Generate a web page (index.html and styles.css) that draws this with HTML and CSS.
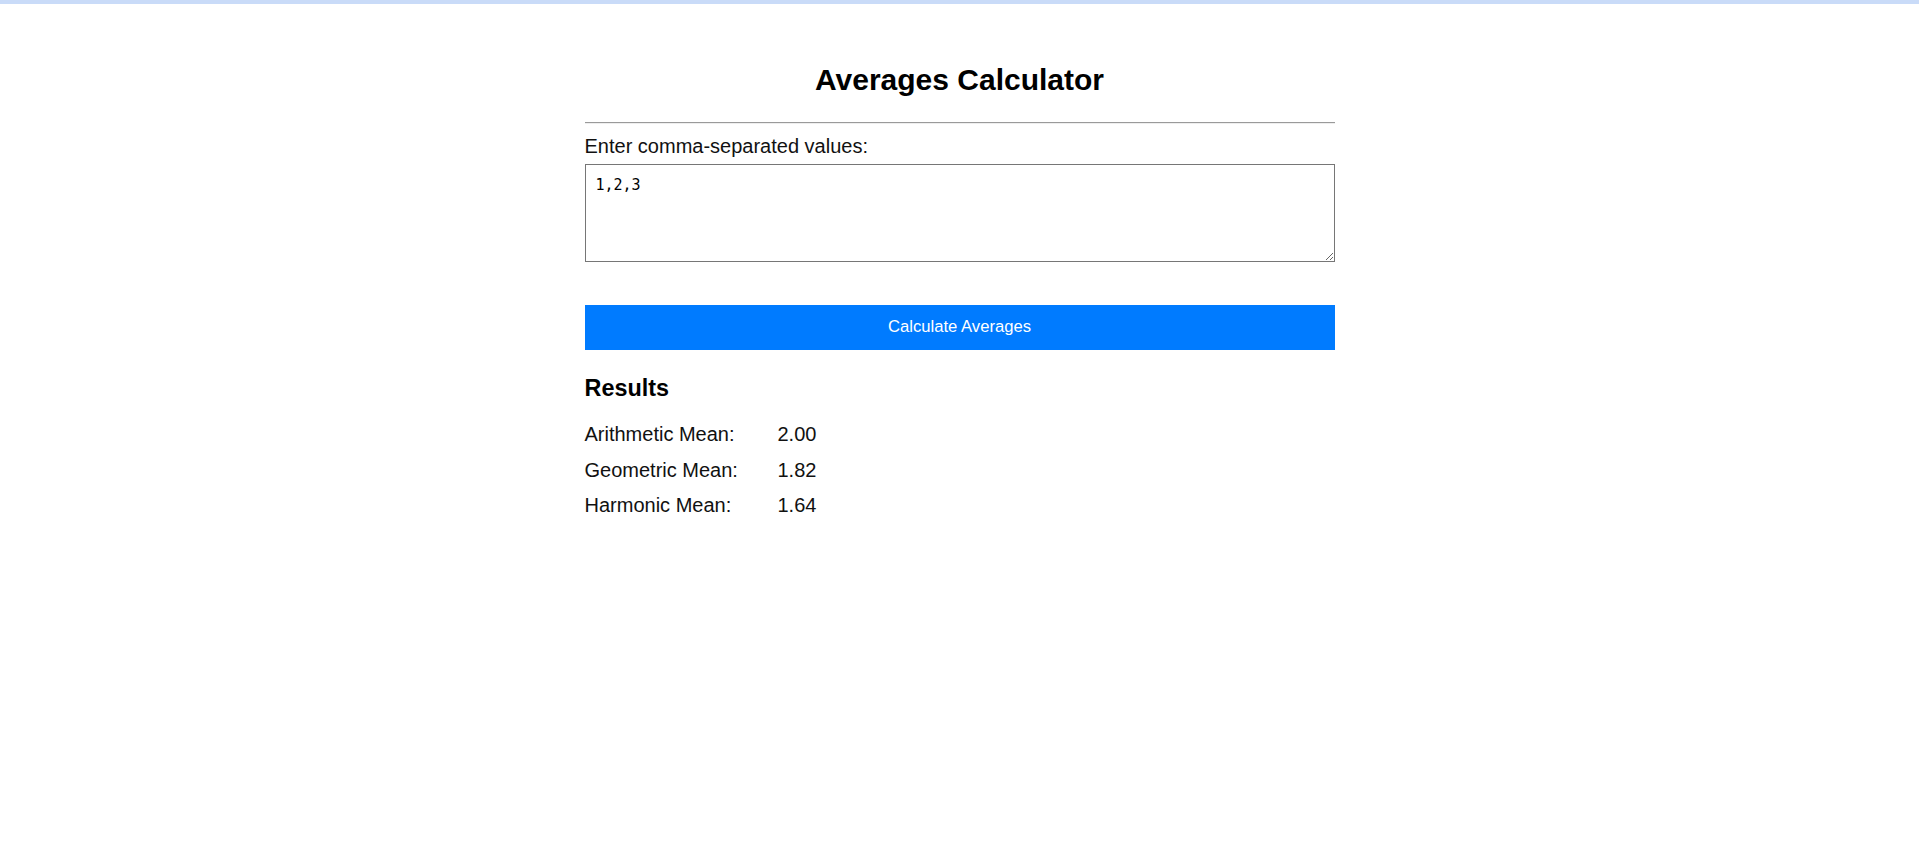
FILE: index.html
```html
<!DOCTYPE html>
<html lang="en">
<head>
<meta charset="utf-8">
<title>Averages Calculator</title>
<link rel="stylesheet" href="styles.css">
</head>
<body>
<div class="page">
  <main class="calc">
    <h1 class="calc-title">Averages Calculator</h1>
    <hr class="calc-rule">
    <label class="calc-label" for="values">Enter comma-separated values:</label>
    <textarea id="values" class="calc-input">1,2,3</textarea>
    <button class="calc-button" type="button">Calculate Averages</button>
    <section class="results">
      <h3 class="results-title">Results</h3>
      <div class="results-grid">
        <span class="results-name">Arithmetic Mean:</span><span class="results-value">2.00</span>
        <span class="results-name">Geometric Mean:</span><span class="results-value">1.82</span>
        <span class="results-name">Harmonic Mean:</span><span class="results-value">1.64</span>
      </div>
    </section>
  </main>
</div>
</body>
</html>
```

FILE: styles.css
```css
html, body {
  margin: 0;
  padding: 0;
  background: #ffffff;
}

body {
  border-top: 4px solid #c9dbf8;
  font-family: "Liberation Sans", Arial, sans-serif;
  font-size: 20px;
  color: #111111;
}

.page {
  padding-top: 59px;
}

.calc {
  width: 750px;
  margin: 0 auto;
  display: flex;
  flex-direction: column;
}

.calc-title {
  margin: 0 0 25px;
  font-size: 30px;
  font-weight: bold;
  text-align: center;
  color: #000000;
  line-height: normal;
}

.calc-rule {
  margin: 0 0 11px;
  border: 0;
  border-top: 1px solid #9a9a9a;
  border-bottom: 1px solid #eeeeee;
  height: 0;
}

.calc-label {
  display: block;
  line-height: normal;
  margin-bottom: 6px;
}

.calc-input {
  box-sizing: border-box;
  width: 750px;
  height: 98px;
  padding: 11px 10px 10px;
  border: 1px solid #767676;
  font-family: "DejaVu Sans Mono", "Liberation Mono", monospace;
  font-size: 15px;
  color: #000000;
  resize: vertical;
  margin: 0 0 43px;
}

.calc-button {
  height: 45px;
  width: 750px;
  border: 0;
  background: #007bff;
  color: #ffffff;
  font-family: "Liberation Sans", Arial, sans-serif;
  font-size: 16.67px;
  padding: 0 0 2px;
  margin: 0 0 25px;
}

.results-title {
  margin: 0 0 21px;
  font-size: 23.4px;
  font-weight: bold;
  color: #000000;
  line-height: normal;
}

.results-grid {
  display: grid;
  grid-template-columns: 193px auto;
  row-gap: 12px;
  line-height: 23.5px;
}
```
